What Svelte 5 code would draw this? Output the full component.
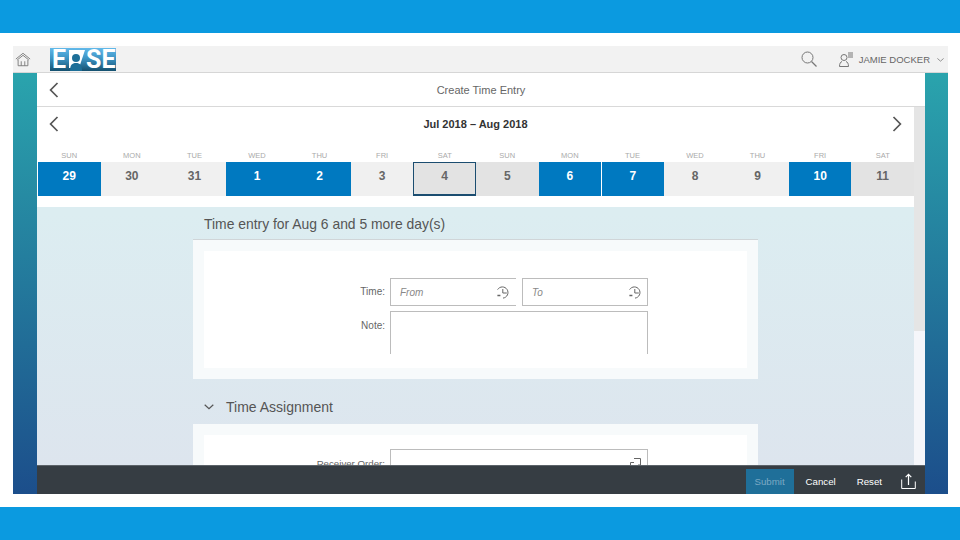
<script>
    const days = [
        { label: "SUN", num: 29, kind: "on" },
        { label: "MON", num: 30, kind: "" },
        { label: "TUE", num: 31, kind: "" },
        { label: "WED", num: 1, kind: "on" },
        { label: "THU", num: 2, kind: "on" },
        { label: "FRI", num: 3, kind: "" },
        { label: "SAT", num: 4, kind: "weekend current" },
        { label: "SUN", num: 5, kind: "weekend" },
        { label: "MON", num: 6, kind: "on" },
        { label: "TUE", num: 7, kind: "on split" },
        { label: "WED", num: 8, kind: "" },
        { label: "THU", num: 9, kind: "" },
        { label: "FRI", num: 10, kind: "on" },
        { label: "SAT", num: 11, kind: "weekend" }
    ];
</script>

{#snippet clock()}
    <svg class="clock" width="15" height="15" viewBox="0 0 15 15" fill="none" stroke="#666" stroke-width="1">
        <path d="M2.6 4.6A5.6 5.6 0 1 1 8 13.1" />
        <path d="M7.8 4v4h4" />
        <path d="M1.6 7.5v.1M2.4 10.5h3" stroke-width="1.4" />
    </svg>
{/snippet}

{#snippet back()}
    <svg width="10" height="16" viewBox="0 0 10 16" fill="none" stroke="#555" stroke-width="1.7">
        <path d="M8.5 1 1.6 8l6.9 7" />
    </svg>
{/snippet}

<div class="band"></div>
<div id="shell">
    <header>
        <svg class="home" width="16" height="15" viewBox="0 0 18 16" fill="none" stroke="#777" stroke-width="1">
            <path d="M1 7.500 9 1l8 6.500M2.500 8.500 9 3.300l6.500 5.200" />
            <path d="M3.500 8.500V15h11V8.500M7 15v-5M11 15v-5" />
        </svg>
        <div class="logo">
            <span>E</span>
            <svg width="20" height="23" viewBox="0 0 20 23">
                <path d="M3 2h16l-6 18H3z" fill="#fff" />
                <circle cx="10" cy="10" r="4" fill="#1d6f98" />
                <path d="M4 23c0-6 2-8 6-8s6 2 6 8z" fill="#1d6f98" />
            </svg>
            <span>SE</span>
        </div>
        <div class="spacer"></div>
        <svg class="search" width="16" height="16" viewBox="0 0 16 16" fill="none" stroke="#777" stroke-width="1">
            <circle cx="6.500" cy="6.500" r="5.500" />
            <path d="m10.500 10.500 5 5" stroke-width="1.300" />
        </svg>
        <svg class="user" width="14" height="15" viewBox="0 0 14 15" fill="none" stroke="#777" stroke-width="1">
            <circle cx="5" cy="5.500" r="3" />
            <path d="M.5 14.500c0-3 1-4.500 2.500-5M9.500 14.500c0-3-1-4.500-2.500-5M.5 14.500h9M9 1h5M9 3h5M9 5h5" />
        </svg>
        <span class="name">JAMIE DOCKER</span>
        <svg class="caret" width="7" height="4" viewBox="0 0 9 5" fill="none" stroke="#777" stroke-width="1">
            <path d="m.5.500 4 3.500 4-3.500" />
        </svg>
    </header>

    <div id="main">
        <div class="title-row">
            <button>{@render back()}</button>
            <span>Create Time Entry</span>
        </div>

        <div class="middle">
            <div class="scroller">
                <div class="calendar">
                    <div class="date-nav">
                        <button>{@render back()}</button>
                        <b>Jul 2018 – Aug 2018</b>
                        <button class="next">{@render back()}</button>
                    </div>
                    <div class="days">
                        {#each days as day}
                            <div class="day">
                                <span class="label">{day.label}</span>
                                <div class="cell {day.kind}">{day.num}</div>
                            </div>
                        {/each}
                    </div>
                </div>

                <div class="form">
                    <h2>Time entry for Aug 6 and 5 more day(s)</h2>
                    <div class="panel">
                        <div class="inner first">
                            <span class="field-label time">Time:</span>
                            <div class="times">
                                <div class="input from"><i>From</i>{@render clock()}</div>
                                <div class="input to"><i>To</i>{@render clock()}</div>
                            </div>
                            <span class="field-label note-label">Note:</span>
                            <div class="note"></div>
                        </div>
                    </div>

                    <div class="section">
                        <svg width="10" height="6" viewBox="0 0 10 6" fill="none" stroke="#555" stroke-width="1.200">
                            <path d="m.7.700 4.300 4 4.300-4" />
                        </svg>
                        <span>Time Assignment</span>
                    </div>
                    <div class="panel">
                        <div class="inner second">
                            <span class="field-label order-label">Receiver Order:</span>
                            <div class="input order">
                                <svg width="11" height="11" viewBox="0 0 11 11" fill="none" stroke="#666" stroke-width="1">
                                    <path d="M4 .5h6.500V7H8M.5 4.500H4M.5 4.500V11" />
                                </svg>
                            </div>
                        </div>
                    </div>
                </div>
            </div>
            <div class="track"><div class="thumb"></div></div>
        </div>

        <footer>
            <button class="submit">Submit</button>
            <button>Cancel</button>
            <button>Reset</button>
            <svg width="15" height="16" viewBox="0 0 15 16" fill="none" stroke="#fff" stroke-width="1.200">
                <path d="M7.500 12V1.500M4.700 4.200 7.500 1.300l2.800 2.900" />
                <path d="M.7 15.500V6.500M14.300 15.500V8.500M.7 15.500h13.600" stroke-width="1" />
            </svg>
        </footer>
    </div>
</div>
<div class="band"></div>

<style>
    :global(body) {
        background: white;
        font-family: "Liberation Sans", Arial, sans-serif;
    }

    button {
        background: none;
        border: none;
        padding: 0;
        font: inherit;
        display: flex;
    }

    .band {
        height: 33px;
        background: #0b9ae0;
    }

    #shell {
        margin: 13px 12px 13px 13px;
        height: 448px;
        display: flex;
        flex-direction: column;
        background: linear-gradient(#2ba9af, #1c4e8b);
    }

    header {
        height: 26px;
        flex: none;
        background: #f2f2f2;
        border-bottom: 1px solid #d6d6d6;
        display: flex;
        align-items: center;
    }

    .home {
        margin-left: 2px;
    }

    .logo {
        margin-left: 19px;
        width: 66px;
        height: 23px;
        box-sizing: border-box;
        padding-left: 2px;
        display: flex;
        align-items: center;
        background: linear-gradient(#62b9ea, #3d94c4 45%, #14506f);
        color: white;
        font-family: Roboto, sans-serif;
        font-weight: bold;
        font-size: 25px;
        line-height: 23px;
    }

    .logo svg {
        flex: none;
    }

    .spacer {
        flex: 1;
    }

    .search {
        margin-right: 22px;
    }

    .user {
        margin-right: 6px;
    }

    .name {
        font-size: 9.500px;
        color: #666;
    }

    .caret {
        margin: 1px 4px 0 7px;
    }

    #main {
        flex: 1;
        min-height: 0;
        margin: 0 23px 0 24px;
        display: flex;
        flex-direction: column;
    }

    .title-row {
        height: 33px;
        flex: none;
        background: white;
        border-bottom: 1px solid #d9d9d9;
        display: flex;
        align-items: center;
        justify-content: center;
        position: relative;
        font-size: 11px;
        color: #666;
    }

    .title-row button {
        position: absolute;
        left: 12px;
        top: 9px;
    }

    .middle {
        flex: 1;
        min-height: 0;
        display: flex;
    }

    .scroller {
        flex: 1;
        min-width: 0;
        overflow: hidden;
        background: linear-gradient(#dcedf1 30%, #dde5ee);
    }

    .track {
        width: 11px;
        flex: none;
        background: #f5f6fa;
    }

    .thumb {
        height: 224px;
        background: #e5e5e5;
    }

    .calendar {
        height: 100px;
        background: white;
        padding-left: 1px;
    }

    .date-nav {
        height: 43px;
        display: flex;
        align-items: center;
        justify-content: space-between;
        padding: 0 12px 10px 11px;
        box-sizing: border-box;
        font-size: 11px;
        color: #333;
    }

    .next {
        transform: scaleX(-1);
    }

    .days {
        display: grid;
        grid-template-columns: repeat(14, 1fr);
    }

    .day {
        display: flex;
        flex-direction: column;
        align-items: center;
    }

    .label {
        height: 12px;
        font-size: 7.500px;
        line-height: 12px;
        color: #aaa;
    }

    .cell {
        width: 100%;
        height: 34px;
        box-sizing: border-box;
        display: flex;
        align-items: center;
        justify-content: center;
        padding-bottom: 6px;
        background: #f0f0f0;
        color: #666;
        font-size: 12px;
        font-weight: bold;
    }

    .cell.on {
        background: #0079c0;
        color: white;
    }

    .cell.weekend {
        background: #e3e3e3;
    }

    .cell.current {
        border: 1px solid #1b4d70;
        border-bottom-width: 2px;
    }

    .cell.split {
        border-left: 1px solid white;
    }

    .form {
        width: 565px;
        margin: 0 auto;
    }

    h2 {
        margin: 0;
        height: 33px;
        box-sizing: border-box;
        padding-left: 11px;
        border-bottom: 1px solid #d0d5d8;
        font-size: 13.900px;
        line-height: 35px;
        font-weight: normal;
        color: #555;
    }

    .panel {
        background: #f7fafb;
        padding: 11px;
    }

    .inner {
        background: white;
        display: grid;
        grid-template-columns: 181px 258px;
        column-gap: 5px;
        row-gap: 5px;
    }

    .inner.first {
        padding-top: 27px;
        height: 117px;
        box-sizing: border-box;
        grid-template-rows: 28px 43px;
    }

    .inner.second {
        padding-top: 14px;
        height: 60px;
        box-sizing: border-box;
    }

    .field-label {
        text-align: right;
        font-size: 10px;
        color: #666;
        line-height: 28px;
    }

    .field-label.time {
        line-height: 27px;
    }

    .field-label.note-label {
        line-height: 30px;
    }

    .field-label.order-label {
        font-size: 9.700px;
        line-height: 30px;
    }

    .times {
        display: flex;
        gap: 6px;
    }

    .input {
        height: 28px;
        box-sizing: border-box;
        border: 1px solid #bcbcbc;
        display: flex;
        align-items: center;
        justify-content: space-between;
        font-size: 10px;
        color: #888;
        padding: 0 5px 0 9px;
    }

    .from {
        width: 126px;
        border-right: none;
        padding-right: 6px;
    }

    .to {
        width: 126px;
    }

    .order {
        align-items: flex-start;
        justify-content: flex-end;
        padding-top: 8px;
        padding-right: 6px;
    }

    .note {
        border: 1px solid #bcbcbc;
        border-bottom: none;
    }

    .section {
        height: 45px;
        box-sizing: border-box;
        padding: 11px 0 0 11px;
        display: flex;
        align-items: center;
        gap: 12px;
        font-size: 14px;
        color: #555;
    }

    footer {
        height: 29px;
        flex: none;
        box-sizing: border-box;
        background: #363d43;
        border-top: 1px solid #5c6369;
        display: flex;
        align-items: flex-end;
        justify-content: flex-end;
        gap: 21px;
        padding-right: 9px;
        font-size: 9.700px;
        color: white;
    }

    footer button {
        height: 25px;
        align-items: center;
        color: white;
    }

    footer .submit {
        width: 48px;
        justify-content: center;
        background: #1f6f99;
        color: #7ba9c4;
        margin-right: -9px;
    }

    footer svg {
        margin: 0 0 5px -2px;
    }
</style>
